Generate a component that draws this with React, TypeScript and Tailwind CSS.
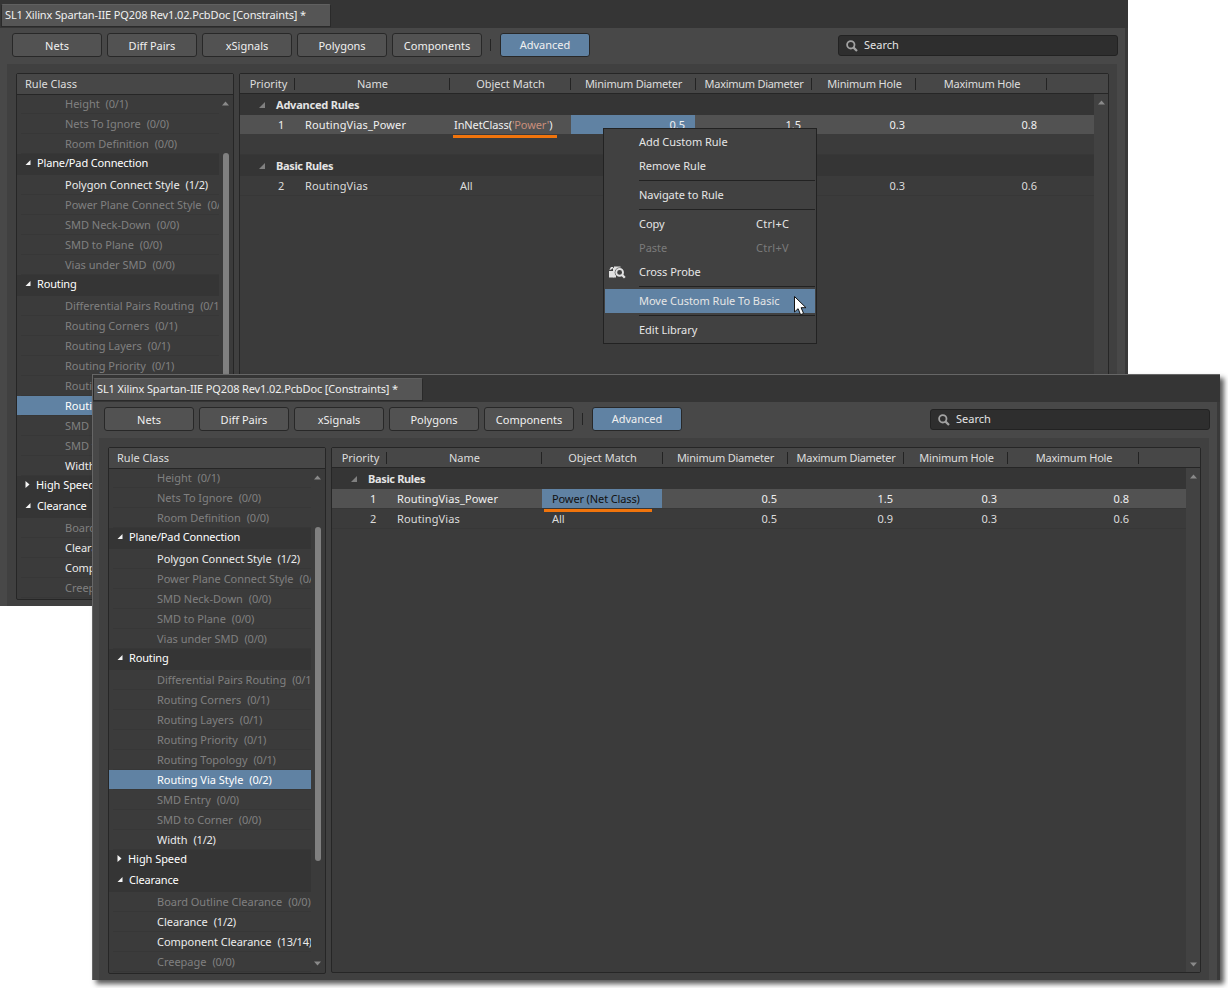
import type { ReactNode } from "react";

type TreeRow = { label: string; count?: string; kind: "open" | "closed" | "item"; on?: boolean; selected?: boolean };

const tree: TreeRow[] = [
  { label: "Height", count: "(0/1)", kind: "item" },
  { label: "Nets To Ignore", count: "(0/0)", kind: "item" },
  { label: "Room Definition", count: "(0/0)", kind: "item" },
  { label: "Plane/Pad Connection", kind: "open" },
  { label: "Polygon Connect Style", count: "(1/2)", kind: "item", on: true },
  { label: "Power Plane Connect Style", count: "(0/0)", kind: "item" },
  { label: "SMD Neck-Down", count: "(0/0)", kind: "item" },
  { label: "SMD to Plane", count: "(0/0)", kind: "item" },
  { label: "Vias under SMD", count: "(0/0)", kind: "item" },
  { label: "Routing", kind: "open" },
  { label: "Differential Pairs Routing", count: "(0/1)", kind: "item" },
  { label: "Routing Corners", count: "(0/1)", kind: "item" },
  { label: "Routing Layers", count: "(0/1)", kind: "item" },
  { label: "Routing Priority", count: "(0/1)", kind: "item" },
  { label: "Routing Topology", count: "(0/1)", kind: "item" },
  { label: "Routing Via Style", count: "(0/2)", kind: "item", selected: true },
  { label: "SMD Entry", count: "(0/0)", kind: "item" },
  { label: "SMD to Corner", count: "(0/0)", kind: "item" },
  { label: "Width", count: "(1/2)", kind: "item", on: true },
  { label: "High Speed", kind: "closed" },
  { label: "Clearance", kind: "open" },
  { label: "Board Outline Clearance", count: "(0/0)", kind: "item" },
  { label: "Clearance", count: "(1/2)", kind: "item", on: true },
  { label: "Component Clearance", count: "(13/14)", kind: "item", on: true },
  { label: "Creepage", count: "(0/0)", kind: "item" },
];

const columns = [
  { label: "Priority", cls: "w-[55px] pl-[3px]" },
  { label: "Name", cls: "w-[155px] pl-[1px]" },
  { label: "Object Match", cls: "w-[121px] tracking-[0px] pl-[1px]" },
  { label: "Minimum Diameter", cls: "w-[125px] tracking-[-0.23px] pl-[1px]" },
  { label: "Maximum Diameter", cls: "w-[116px] tracking-[-0.28px] pl-[1px]" },
  { label: "Minimum Hole", cls: "w-[104px] tracking-[-0.15px] pl-[2px]" },
  { label: "Maximum Hole", cls: "w-[131px] tracking-[-0.2px] pl-[2px]" },
];

function Arrow({ up }: { up?: boolean }) {
  return (
    <svg className="block h-[5px] w-[7px] shrink-0" viewBox="0 0 7 5">
      <path d={up ? "M0 4.5 3.5 0.5 7 4.5Z" : "M0 0.5 3.5 4.5 7 0.5Z"} fill="#8a8a8a" />
    </svg>
  );
}

function RuleTree() {
  return (
    <div className="flex h-[527px] w-[218px] flex-col rounded-[2px] border border-[#262626] bg-[#3b3b3b]">
      <div className="flex h-[21px] shrink-0 items-center border-b border-[#262626] bg-[#474747] pb-[2px] pl-[8px] text-[#dedede]">
        Rule Class
      </div>
      <div className="flex min-h-0 flex-1">
        <div className="-mt-px w-[202px] shrink-0 overflow-hidden">
          {tree.map((r, i) =>
            r.kind === "item" ? (
              <div key={i} className="h-[20px]">
                <div
                  className={`flex h-[19px] items-center pl-[48px] whitespace-pre ${r.selected ? "bg-[#6082a3] text-white" : r.on ? "text-[#ececec]" : "text-[#808080]"}`}
                >
                  <span className="tracking-[-0.02px]">{r.label}</span>
                  <span className="ml-[6px] tracking-[-0.22px]">{r.count}</span>
                </div>
                <div className="ml-[4px] h-px bg-[#373737]" />
              </div>
            ) : (
              <div key={i} className="flex h-[21px] items-center bg-[#353535] pb-[4px] pl-[8px] tracking-[-0.15px] text-white">
                <svg className="mr-[5px] h-[7px] w-[7px] shrink-0" viewBox="0 0 7 7">
                  <path d={r.kind === "open" ? "M5.5 1V6H0.5Z" : "M0.5 0 4.5 3.5 0.5 7Z"} fill="#f5f5f5" />
                </svg>
                <span className={r.kind === "closed" ? "-ml-px tracking-[-0.05px]" : ""}>{r.label}</span>
              </div>
            ),
          )}
        </div>
        <div className="flex w-[14px] flex-col items-center pt-[6px] pb-[7px]">
          <div className="mr-[1px]">
            <Arrow up />
          </div>
          <div className="mt-[47px] h-[334px] w-[6px] rounded-full bg-[#808080]" />
          <div className="flex-1" />
          <div className="mr-[1px]">
            <Arrow />
          </div>
        </div>
      </div>
    </div>
  );
}

function GroupRow({ label, tight }: { label: string; tight?: boolean }) {
  return (
    <div className={`flex h-[21px] items-center bg-[#353535] pl-[19px] font-bold text-[#e4e4e4] ${tight ? "tracking-[-0.35px]" : "tracking-[-0.22px]"}`}>
      <svg className="mr-[11px] h-[6px] w-[6px] shrink-0" viewBox="0 0 6 6">
        <path d="M6 0V6H0Z" fill="#808080" />
      </svg>
      {label}
    </div>
  );
}

function RuleRow({
  n,
  name,
  match,
  values,
  active,
  matchSelected,
  valueSelected,
  tall,
}: {
  n: string;
  name: string;
  match: ReactNode;
  values: string[];
  active?: boolean;
  matchSelected?: boolean;
  valueSelected?: boolean;
  tall?: boolean;
}) {
  return (
    <div className={`border-b border-[#373737] ${tall ? "h-[40px]" : "h-[20px]"}`}>
      <div className={`flex h-[19px] items-center ${active ? "bg-[#525252] text-[#f0f0f0]" : "text-[#dcdcdc]"}`}>
        <div className="w-[55px] pl-[38px]">{n}</div>
        <div className="w-[155px] pl-[10px] tracking-[0.13px]">{name}</div>
        <div className={`flex h-full w-[121px] items-center ${matchSelected ? "border-r border-[#525252] bg-[#6082a3] text-[#111]" : ""}`}>{match}</div>
        <div className={`flex h-full w-[124px] items-center justify-end pr-[10px] ${valueSelected ? "bg-[#6082a3]" : ""}`}>{values[0]}</div>
        <div className="w-[116px] pr-[10px] text-right">{values[1]}</div>
        <div className="w-[104px] pr-[10px] text-right">{values[2]}</div>
        <div className="w-[131px] pr-[9px] text-right">{values[3]}</div>
      </div>
    </div>
  );
}

function RuleTable({ children }: { children: ReactNode }) {
  return (
    <div className="flex h-[526px] w-[870px] flex-col rounded-[2px] border border-[#262626] bg-[#3b3b3b]">
      <div className="flex h-[20px] shrink-0 items-center border-b border-[#262626] bg-[#474747] text-[#dedede]">
        {columns.map((c) => (
          <div key={c.label} className={`flex h-[12px] items-center justify-center border-r border-[#232323] whitespace-nowrap ${c.cls}`}>
            {c.label}
          </div>
        ))}
      </div>
      <div className="flex min-h-0 flex-1">
        <div className="w-[854px]">{children}</div>
        <div className="flex w-[14px] flex-col items-center justify-between bg-[#424242] pt-[6px] pb-[5px]">
          <Arrow up />
          <Arrow />
        </div>
      </div>
    </div>
  );
}

function Editor({ children }: { children: ReactNode }) {
  return (
    <div className="flex h-[606px] w-[1128px] flex-col bg-[#484848]">
      <div className="flex h-[28px] shrink-0 bg-[#353535] pt-[4px] pl-px">
        <div className="flex h-[23px] w-[330px] items-center rounded-t-[2px] border border-[#2a2a2a] border-t-[#606060] bg-[#555] pb-[2px] pl-[3px] tracking-[-0.13px] whitespace-nowrap text-[#f0f0f0]">
          SL1 Xilinx Spartan-IIE PQ208 Rev1.02.PcbDoc [Constraints] *
        </div>
      </div>
      <div className="flex min-h-0 flex-1">
        <div className="flex w-[1125px] flex-col">
          <div className="flex h-[36px] items-center pr-[7px] pb-[2px] pl-[12px]">
            <div className="flex gap-[5px]">
              {["Nets", "Diff Pairs", "xSignals", "Polygons", "Components"].map((b) => (
                <div
                  key={b}
                  className="flex h-[24px] w-[90px] items-center justify-center rounded-[3px] border border-[#282828] bg-[#525252] text-[#f0f0f0]"
                >
                  {b}
                </div>
              ))}
            </div>
            <div className="ml-[8px] h-[12px] w-px bg-[#242424]" />
            <div className="ml-[9px] flex h-[24px] w-[90px] items-center justify-center rounded-[3px] border border-[#282828] bg-[#6082a3] pb-[2px] text-[#f0f0f0]">
              Advanced
            </div>
            <div className="mt-[1px] ml-auto flex h-[21px] w-[280px] items-center rounded-[3px] border border-[#222] bg-[#2e2e2e] pl-[7px] text-[#e4e4e4]">
              <svg className="mr-[6px] h-[12px] w-[12px]" viewBox="0 0 12 12" fill="none" stroke="#a2a2a2">
                <circle cx="4.8" cy="4.8" r="3.7" strokeWidth="1.8" />
                <path d="M7.6 7.6 11 11" strokeWidth="2.2" />
              </svg>
              <span className="pb-[2px]">Search</span>
            </div>
          </div>
          <div className="ml-[7px] flex w-[1110px] flex-1 items-start gap-[5px] bg-[#404040] pt-[9px] pl-[9px]">
            <RuleTree />
            <RuleTable>{children}</RuleTable>
          </div>
        </div>
        <div className="w-[3px] bg-[#393939]" />
      </div>
    </div>
  );
}

function MenuItem({ label, keys, icon, disabled, hot }: { label: string; keys?: string; icon?: ReactNode; disabled?: boolean; hot?: boolean }) {
  return (
    <div className={`flex h-[24px] items-center ${hot ? "bg-[#6082a3]" : ""} ${disabled ? "text-[#7b7b7b]" : "text-[#e6e6e6]"}`}>
      <div className="w-[34px] pl-[4px]">{icon}</div>
      <div className="w-[117px] pb-[2px] tracking-[-0.02px] whitespace-nowrap">{label}</div>
      <div className="pb-[2px] tracking-[0.3px]">{keys}</div>
    </div>
  );
}

function Divider() {
  return (
    <div className="flex h-[5px] items-center pl-[34px]">
      <div className="h-px flex-1 bg-[#222]" />
    </div>
  );
}

function ContextMenu() {
  return (
    <div className="absolute top-[128px] left-[603px] h-[216px] w-[214px] border border-[#222] bg-[#414141] p-px">
      <MenuItem label="Add Custom Rule" />
      <MenuItem label="Remove Rule" />
      <Divider />
      <MenuItem label="Navigate to Rule" />
      <Divider />
      <MenuItem label="Copy" keys="Ctrl+C" />
      <MenuItem label="Paste" keys="Ctrl+V" disabled />
      <MenuItem
        label="Cross Probe"
        icon={
          <svg className="h-[13px] w-[17px]" viewBox="0 0 17 13">
            <path d="M0 5H4V2H5V11.5H0ZM0.3 3.8 2 1H4.2V2L1.8 3.8Z" fill="#e2e2e2" />
            <path d="M5 0.5H11.5V3H7V11.5H4.5V4H5Z" fill="#e2e2e2" />
            <circle cx="10.6" cy="6.4" r="4.9" fill="#414141" />
            <circle cx="10.6" cy="6.4" r="3.4" fill="none" stroke="#e2e2e2" strokeWidth="1.9" />
            <path d="M13 8.8 15.8 11.8" stroke="#e2e2e2" strokeWidth="2.3" />
          </svg>
        }
      />
      <Divider />
      <MenuItem label="Move Custom Rule To Basic" hot />
      <Divider />
      <MenuItem label="Edit Library" />
      <svg className="absolute top-[167px] left-[190px] h-[20px] w-[13px]" viewBox="0 0 13 20">
        <path d="M0.5 0.5V16L4.1 12.7 6.6 18.7 9.6 17.4 7.1 11.7H12Z" fill="#fff" stroke="#111" strokeWidth="1" />
      </svg>
    </div>
  );
}

export default function App() {
  return (
    <div className="relative h-[988px] w-[1228px] overflow-hidden bg-white font-['Noto_Sans',sans-serif] text-[11px] leading-none tracking-[0px]">
      <Editor>
        <GroupRow label="Advanced Rules" />
        <RuleRow
          n="1"
          name="RoutingVias_Power"
          match={
            <span className="pl-[4px] tracking-[-0.09px]">
              InNetClass(<span className="text-[#c98f7c]">'Power'</span>)
            </span>
          }
          values={["0.5", "1.5", "0.3", "0.8"]}
          active
          valueSelected
          tall
        />
        <GroupRow label="Basic Rules" tight />
        <RuleRow n="2" name="RoutingVias" match={<span className="pl-[10px]">All</span>} values={["0.5", "0.9", "0.3", "0.6"]} />
      </Editor>
      <div className="absolute top-[135px] left-[453px] h-[3px] w-[104px] bg-[#f0740c]" />
      <ContextMenu />
      <div className="absolute top-[374px] left-[92px] shadow-[4px_4px_5px_0px_rgba(0,0,0,0.65)]">
        <Editor>
          <GroupRow label="Basic Rules" tight />
          <RuleRow
            n="1"
            name="RoutingVias_Power"
            match={<span className="pl-[10px] tracking-[-0.12px]">Power (Net Class)</span>}
            values={["0.5", "1.5", "0.3", "0.8"]}
            active
            matchSelected
          />
          <RuleRow n="2" name="RoutingVias" match={<span className="pl-[10px]">All</span>} values={["0.5", "0.9", "0.3", "0.6"]} />
        </Editor>
        <div className="absolute inset-0 border-t border-l border-[#666]" />
        <div className="absolute top-[135px] left-[452px] h-[3px] w-[108px] bg-[#f0740c]" />
      </div>
    </div>
  );
}
